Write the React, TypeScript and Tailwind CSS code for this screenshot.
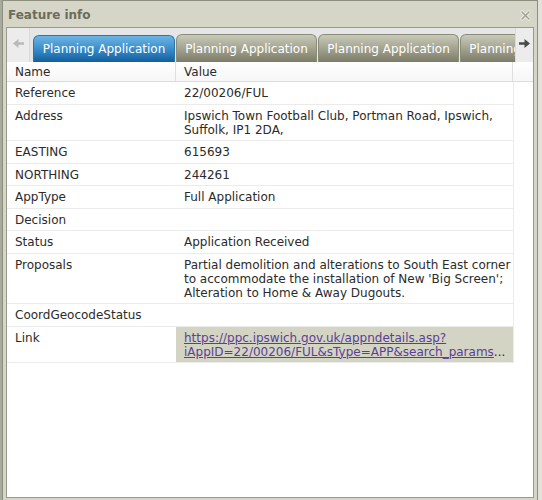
import React from 'react';

const rows: { name: string; lines: string[] }[] = [
  { name: 'Reference', lines: ['22/00206/FUL'] },
  { name: 'Address', lines: ['Ipswich Town Football Club, Portman Road, Ipswich,', 'Suffolk, IP1 2DA,'] },
  { name: 'EASTING', lines: ['615693'] },
  { name: 'NORTHING', lines: ['244261'] },
  { name: 'AppType', lines: ['Full Application'] },
  { name: 'Decision', lines: [''] },
  { name: 'Status', lines: ['Application Received'] },
  {
    name: 'Proposals',
    lines: [
      'Partial demolition and alterations to South East corner',
      "to accommodate the installation of New 'Big Screen';",
      'Alteration to Home & Away Dugouts.',
    ],
  },
  { name: 'CoordGeocodeStatus', lines: [''] },
];

function Arrow({ dir, color }: { dir: 'left' | 'right'; color: string }) {
  return (
    <svg width="11" height="9" viewBox="0 0 11 9" className={dir === 'left' ? 'rotate-180' : ''}>
      <path d="M0 3.2h5.5V0l5.5 4.5-5.5 4.5V5.8H0z" fill={color} />
    </svg>
  );
}

function Tab({ label, active }: { label: string; active?: boolean }) {
  return (
    <div
      className={
        active
          ? 'w-[142px] h-[27px] shrink-0 rounded-t-[6px] border border-b-0 border-[#2c74ad] bg-gradient-to-b from-[#6cb6e6] via-[#3a8dca] to-[#0f5e9e] flex items-center justify-center text-white text-[12px] whitespace-nowrap'
          : 'w-[141px] h-[28px] shrink-0 rounded-t-[6px] border border-b-0 border-[#8c8c7a] bg-gradient-to-b from-[#cacab9] via-[#a3a390] to-[#7b7b67] flex items-center justify-center text-white text-[12px] whitespace-nowrap overflow-hidden'
      }
    >
      {label}
    </div>
  );
}

export default function App() {
  return (
    <div className="w-[542px] h-[500px] overflow-hidden flex bg-[#e2e2da] font-['DejaVu_Sans',sans-serif]">
      <div className="w-[2px] h-full bg-[#a7ab9d]" />
      <div className="w-[536px] h-[500px] flex flex-col border border-b-0 border-[#8e8e7e] bg-[#d6d6c8]">
        <div className="h-[26px] flex items-center justify-between pl-[5px] pr-[6px] pt-[2px]">
          <span className="text-[12px] font-bold text-[#6c6c5c]">Feature info</span>
          <svg width="11" height="11" viewBox="0 0 11 11">
            <path d="M2 2l7 7M9 2l-7 7" stroke="#eeeee6" strokeWidth="3.2" strokeLinecap="round" />
            <path d="M2 2l7 7M9 2l-7 7" stroke="#a3a393" strokeWidth="1.6" strokeLinecap="round" />
          </svg>
        </div>
        <div className="flex-1 mx-[3px] mb-[2px] flex flex-col border border-[#9a9a8a] bg-white">
          <div className="h-[34px] flex items-end bg-[#e6e6e6]">
            <div className="w-[23px] h-full flex items-center justify-center pb-[4px] bg-[#ececec] border-r border-[#dadada]">
              <Arrow dir="left" color="#b9b9b9" />
            </div>
            <div className="flex-1 flex items-end gap-[1px] pl-[3px] overflow-hidden">
              <Tab label="Planning Application" active />
              <Tab label="Planning Application" />
              <Tab label="Planning Application" />
              <Tab label="Planning Application" />
            </div>
            <div className="w-[18px] h-full flex items-center justify-center pb-[4px] bg-[#ececec] border-l border-[#dadada]">
              <Arrow dir="right" color="#4a4a4a" />
            </div>
          </div>
          <div className="flex text-[12px] text-[#2b2b2b] leading-[14px] border-b border-[#dcdcdc] bg-gradient-to-b from-white to-[#f6f6f6]">
            <div className="w-[169px] shrink-0 px-[8px] pt-[3px] pb-[2px] border-r border-[#dedede]">Name</div>
            <div className="w-[337px] shrink-0 pl-[8px] pt-[3px] pb-[2px] border-r border-[#dedede]">Value</div>
            <div className="flex-1" />
          </div>
          <div className="w-[507px] border-r border-[#ececec] text-[12px] leading-[14px] text-[#2b2b2b]">
            {rows.map((r) => (
              <div key={r.name} className="flex border-b border-[#ebebeb]">
                <div className="w-[169px] shrink-0 px-[8px] pt-[4px] pb-[3.5px] whitespace-nowrap">{r.name}</div>
                <div className="flex-1 min-w-0 pl-[8px] pt-[4px] pb-[3.5px] whitespace-nowrap">
                  {r.lines.map((l, i) => (
                    <div key={i} className="h-[14px]">{l}</div>
                  ))}
                </div>
              </div>
            ))}
            <div className="flex border-b border-[#ebebeb]">
              <div className="w-[169px] shrink-0 px-[8px] pt-[4px] pb-[3.5px]">Link</div>
              <div className="flex-1 min-w-0 pl-[8px] pt-[4px] pb-[3.5px] bg-[#d4d4c4] whitespace-nowrap">
                <div className="h-[14px] text-[#5b3f96] underline">https://ppc.ipswich.gov.uk/appndetails.asp?</div>
                <div className="h-[14px]">
                  <span className="text-[#5b3f96] underline">iAppID=22/00206/FUL&amp;sType=APP&amp;search_params</span>
                  <span>...</span>
                </div>
              </div>
            </div>
          </div>
        </div>
      </div>
    </div>
  );
}
